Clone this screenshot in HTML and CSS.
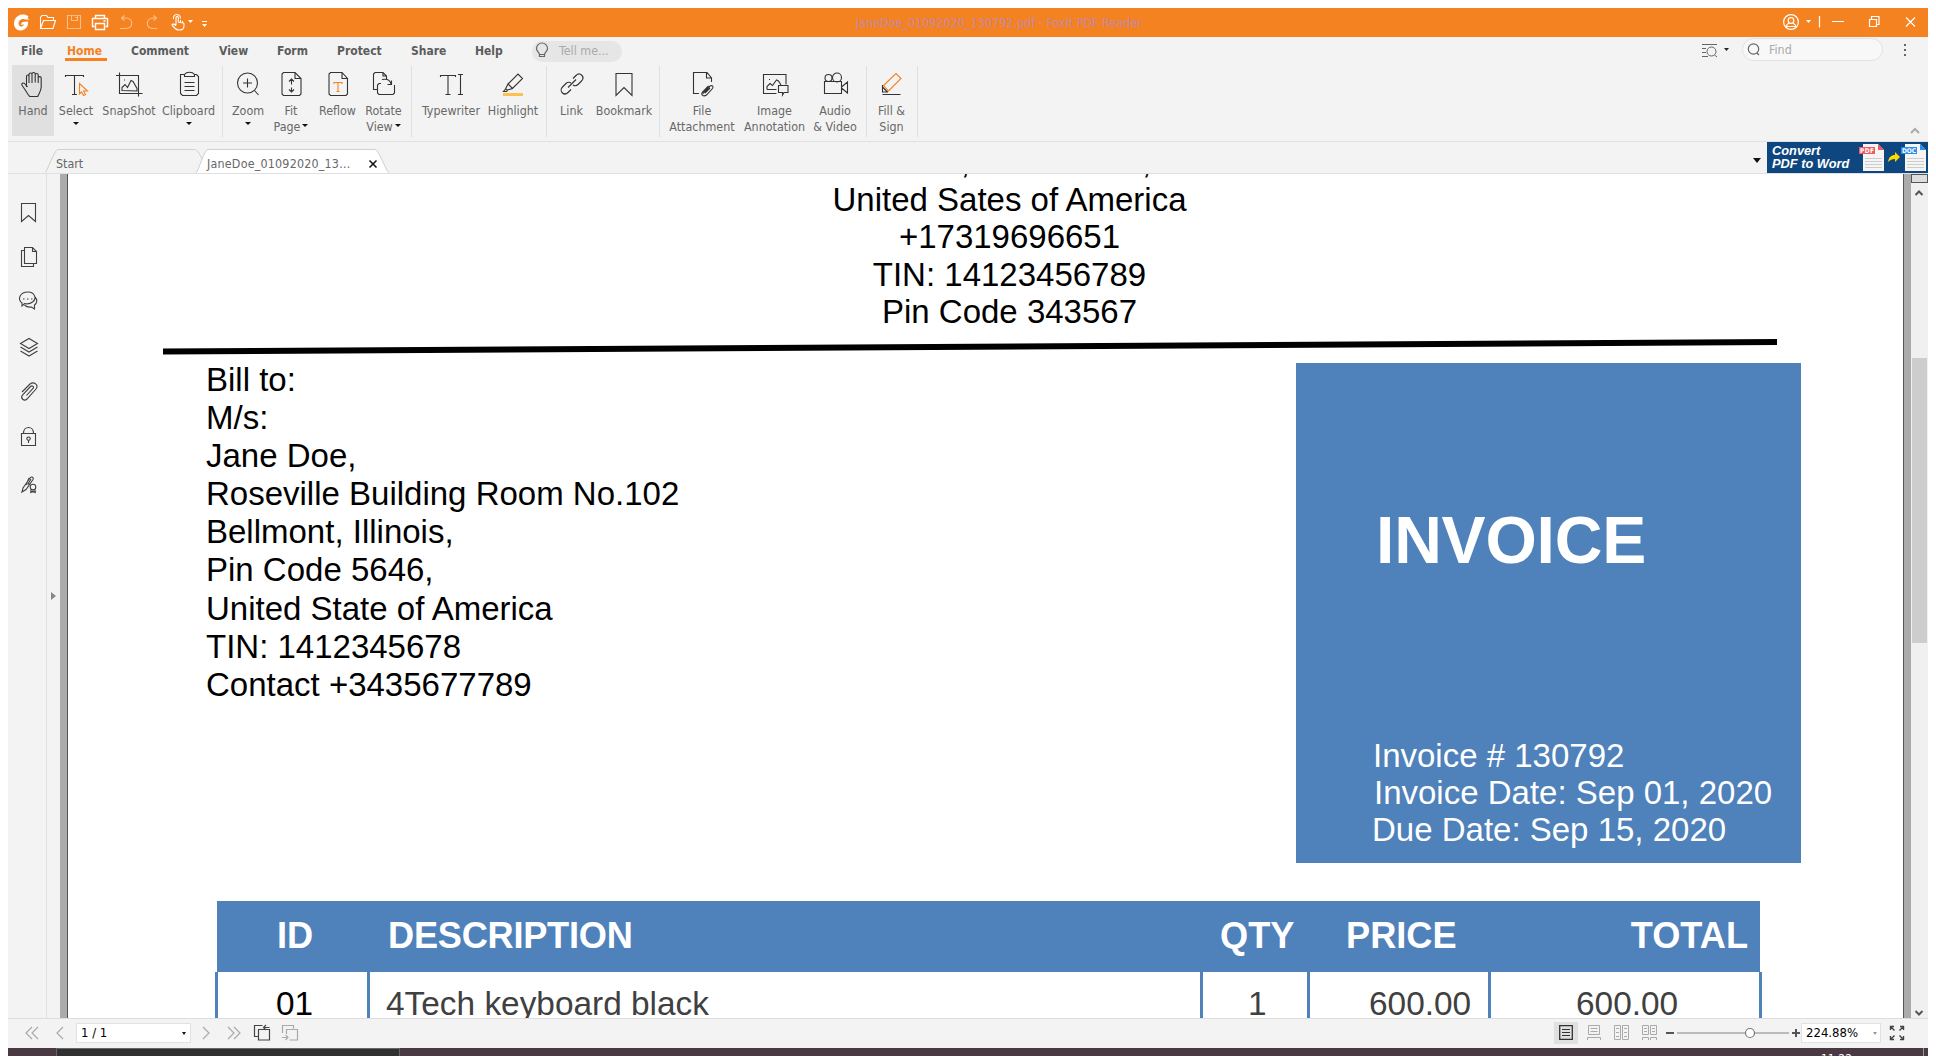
FILE: index.html
```html
<!DOCTYPE html>
<html lang="en">
<head>
<meta charset="utf-8">
<title>JaneDoe_01092020_130792.pdf - Foxit PDF Reader</title>
<link rel="stylesheet" href="styles.css">
</head>
<body>
<div class="window">
  <header class="titlebar">
    <svg class="quick" width="220" height="29" viewBox="8 8 220 29">
      <path fill="#fff" d="M28.500 16.500C24 13 17 14.500 14.600 20C12.500 26 16 30.800 21 30.500C26 30 28.500 26 28 21.500L22.500 22L20.500 24.800L24 24.500C22.500 27.500 19 27.300 18.500 23.800C18.500 20 22 17.800 26 19.500L29.500 19.500L27.500 18Z"/>
      <g fill="none" stroke="#fff" stroke-width="1.1">
        <path d="M40.500 28V17.500l1.500-2h4.500l1.500 2h5.500v3M40.500 28.500l3-8h12l-2.500 8z"/>
        <g stroke="#fbbd88"><path d="M67.500 15.500h13v13h-13zM71.500 15.500v5h6v-5M75 17.500h2"/><path d="M124.500 15.500l-3 2.500 3 2.500M121.500 18h5c7 1 7 10-.5 10.500h-6"/><path d="M153.500 15.500l3 2.500-3 2.500M156.500 18h-4c-7 1-7 10 .5 10.500h4"/></g>
        <path stroke-width="1.400" d="M95.500 18.500v-3h9v3M94.500 26.500h-2v-8h15v8h-2M95.500 23.500h9v6h-9zM103.500 21h2"/>
        <path d="M176 25V17.500c.3-1.500 2-1.500 2.300 0v4.500l5 1c.9.300.7 1.500.7 2.500 0 4-2 4.500-5.500 4.500-3.500-.5-5-3-6.500-5 .5-1.500 2.500-1 4 .8M180.500 20v3M182.500 21v2.500M173.500 19c-1-6 7-6 7-.5"/>
      </g>
      <path fill="#fff" d="M188 20h5l-2.500 3zM202 24h5l-2.500 3zM202 21h5v1h-5z"/>
    </svg>
    <div class="doc-title">JaneDoe_01092020_130792.pdf - Foxit PDF Reader</div>
    <svg class="caption" width="150" height="29" viewBox="1778 8 150 29">
      <g fill="none" stroke="#fff" stroke-width="1.200"><circle cx="1791" cy="22" r="7.400"/><circle cx="1791" cy="20.500" r="2.800"/><path d="M1786 27c.5-3 2-3.500 3.500-4M1796 27c-.5-3-2-3.500-3.500-4M1786 26.500h10M1819.500 16v11.500M1832 21.500h12M1869.500 19.500h7v7h-7zM1871.500 19.500v-3h7.500v8h-2.500M1906 17.500l9 9M1915 17.500l-9 9"/></g>
      <path fill="#fff" d="M1806 20h5l-2.500 3z"/>
    </svg>
  </header>

  <nav class="menubar">
    <div class="menus"><span>File</span><span class="current">Home</span><span>Comment</span><span>View</span><span>Form</span><span>Protect</span><span>Share</span><span>Help</span></div>
    <div class="tellme">
      <svg width="16" height="18" viewBox="0 0 16 18" fill="none" stroke="#666" stroke-width="1.200"><path d="M5.500 12.500C5.500 10.500 2.500 9.500 2.500 6.500a5.500 5.500 0 0 1 11 0c0 3-3 4-3 6zM5.500 12.500v2h5v-2"/></svg>
      <span>Tell me...</span>
    </div>
    <div class="findarea">
      <svg width="30" height="16" viewBox="1700 41 30 16" fill="none" stroke="#666"><path d="M1702 43.500h15M1702 47.500h4M1702 51.500h4M1702 55.500h6M1714.500 54l2.500 2"/><circle cx="1711.500" cy="50.500" r="4.500"/><path fill="#222" stroke="none" d="M1724 47h5l-2.500 3z"/></svg>
      <div class="find"><svg width="16" height="16" viewBox="0 0 16 16" fill="none" stroke="#666" stroke-width="1.200"><circle cx="6.500" cy="7" r="5.200"/><path d="M10 11l2 2"/></svg><span>Find</span></div>
      <svg width="4" height="14" viewBox="0 0 4 14" fill="#666"><path d="M1 1h2v2H1zM1 6h2v2H1zM1 11h2v2H1z"/></svg>
    </div>
  </nav>

  <section class="ribbon">
    <div class="tool hand"><svg viewBox="-1.500 0 30 30"><path d="M7 18V7.500c0-2 2.500-2 2.500 0V14M9.500 14V5.500c0-2 3-2 3 0V14M12.500 13V5c0-2 3.200-2 3.200 0v8.500M15.700 13V6c0-2 3-2 3 0v8M18.700 13V9c0-1.800 3-1.800 3 0v9c0 4-2 6-3.500 9.500h-8C8 25.500 5.500 20 3 17c-2-2.500 1-4 2.500-2L8 18"/></svg><span>Hand</span></div>
    <div class="tool w44"><svg viewBox="0 0 30 30"><path d="M4.500 8V6.500h18V8M13.500 6.500v19M11 25.500h5"/><path stroke="#f58220" d="M18.500 14.500l8 7.500h-4l2 3.500-2 1-2-3.500-2 2z"/></svg><span>Select</span><i class="arrow"></i></div>
    <div class="tool w62"><svg viewBox="0 0 30 30"><path d="M5.500 3.500v21h23M2 6.500h22.500v21M8 21.500v-3l3-3 2.500 3 3.500-7 2 1 4 7v2.500zM10 11h1"/></svg><span>SnapShot</span></div>
    <div class="tool w57"><svg viewBox="0 0 30 30"><path d="M10.500 5.500h-4v19l2 2h14l2-2V7.500l-2-2h-2.500M10.500 7.500v-2c2-3 8-3 10 0v2zM10.500 13.500h10M10.500 17.500h10M10.500 21.500h10"/></svg><span>Clipboard</span><i class="arrow"></i></div>
    <div class="sep s1"></div>
    <div class="tool w44"><svg viewBox="0 0 30 30"><circle cx="14.500" cy="14" r="10"/><path d="M14.500 9.500v9M10 14h9M21.500 21.500l4 4.500"/></svg><span>Zoom</span><i class="arrow"></i></div>
    <div class="tool w42"><svg viewBox="-.5 0 30 30"><path d="M7 3.500h11.500l6 6V25l-1.500 1.500H7L5.500 25V5zM18.500 3.500v6h6M15 10.500v5M15 18.500v4M12.500 12.500l2.500-2.500 2.500 2.500M12.500 20.500l2.500 2.500 2.500-2.500"/></svg><span>Fit<br>Page<i class="caret"></i></span></div>
    <div class="tool w51"><svg viewBox="-.5 0 30 30"><path d="M7 3.500h11.500l5.500 6V25l-1.500 1.500H7L5.500 25V5zM18.500 3.500v6H24"/><path stroke="#f58220" d="M10.500 15v-1.500h8V15M14.500 13.500v9M13 22.500h3"/></svg><span>Reflow</span></div>
    <div class="tool w41"><svg viewBox="0 0 30 30"><path d="M8.500 20.500h-4V5l1.500-1.500h8L17.500 7v3M14 3.500V7h3M12 14.500h-2L8.500 16v8l1.500 1.500h14l1.500-1.500v-8M13 10.500c5-1 8 0 9 4.500M18.500 15.500h4v-4"/></svg><span>Rotate<br>View<i class="caret"></i></span></div>
    <div class="sep s2"></div>
    <div class="tool w66"><svg viewBox="0 0 30 30"><path d="M4.500 8V6.500h15V8M12 6.500v19M9.500 25.500h5M22 5.500h5M24.500 5.500v20M22 25.500h5"/></svg><span>Typewriter</span></div>
    <div class="tool w58"><svg viewBox="-1 0 30 30"><path d="M9 15l10-10 4.500 4.500-10 10zM9 15l-2.500 5 2 1 5-1.500M6.500 20l-2 2.500h3l1-1"/><path stroke="#fbc24f" stroke-width="3" d="M4 25.500h20"/></svg><span>Highlight</span></div>
    <div class="sep s3"></div>
    <div class="tool w43"><svg viewBox="0 0 30 30"><path d="M16 9.500l3-3c4-4 9.500 1.500 5.500 5.500l-3.500 3.500c-1.500 1.500-3.500 1.500-5 .5M14 20.500l-3 3c-4 4-9.500-1.500-5.500-5.500L9 14.500c1.500-1.500 3.500-1.500 5-.5M11 18.500l8-8"/></svg><span>Link</span></div>
    <div class="tool w62"><svg viewBox="0 0 30 30"><path d="M7 4.500h16v22l-8-8-8 8z"/></svg><span>Bookmark</span></div>
    <div class="sep s4"></div>
    <div class="tool w74"><svg viewBox="0 0 30 30"><path d="M12 24.500H6.500v-21H20l4.500 5.500v4M19.500 3.500V9h5M16 24.500l7-7.500c2-1 4 0 2.500 2.500l-6 6.500c-3 2-6 0-4-3l6-6M18 24l5-5"/></svg><span>File<br>Attachment</span></div>
    <div class="tool w71"><svg viewBox="0 0 30 30"><path d="M16.500 24.500h-13v-19H26v10M7 20.500v-3l3-3 2.500 2 4-5.500 2 1 2.500 4M16.500 20.500H7M9 10.500h1M18.500 16.500H28v7h-4l-1.500 2.500V23.500h-4z"/></svg><span>Image<br>Annotation</span></div>
    <div class="tool w50"><svg viewBox="-1 0 30 30"><circle cx="7.500" cy="9" r="3.500"/><circle cx="16" cy="8.500" r="4.500"/><path d="M3.500 12.500h17v12h-17zM20.500 18l6-5v11l-6-5"/></svg><span>Audio<br>&amp; Video</span></div>
    <div class="sep s5"></div>
    <div class="tool w39"><svg viewBox="1 0 30 30"><path d="M6.500 16v7h5.500M6.500 25.500h18M6.500 18l5 5"/><path stroke="#f58220" d="M7.500 16.500L20 4.500l5 5L12.500 22z"/></svg><span>Fill &amp;<br>Sign</span></div>
    <div class="sep s6"></div>
    <svg class="collapse" width="10" height="8" viewBox="0 0 10 8"><path d="M1 6l4-4 4 4" fill="none" stroke="#aaa" stroke-width="2"/></svg>
  </section>

  <div class="tabs">
    <svg class="tabshape" width="400" height="31" viewBox="8 142 400 31"><path d="M45.500 172.500c2-3 9-22 12-23h137c3 0 6 6 8 11" fill="#f3f3f3" stroke="#d0d0d0"/><path d="M196 173c3-3 8-23 12-23.500h167c4 .5 10 19.500 14 23.500" fill="#fff" stroke="#d0d0d0"/></svg>
    <span class="tab-start">Start</span><span class="tab-doc">JaneDoe_01092020_13...</span>
    <svg class="close" width="10" height="10" viewBox="0 0 10 10"><path d="M1.500 1.500l7 7M8.500 1.500l-7 7" stroke="#111" stroke-width="1.500"/></svg>
    <i class="bigarrow"></i>
    <div class="banner"><b>Convert<br>PDF to Word</b>
      <svg width="70" height="31" viewBox="0 0 70 31"><path fill="#f5f5f5" d="M5 2h15l6 6v21H5zM47 2h15l6 6v21H47z"/><path fill="#ee5a5f" d="M20 2l6 6h-6zM1 5h16v7H1z"/><path fill="#2c8de8" d="M62 2l6 6h-6zM43 5h16v7H43z"/><path stroke="#ccc" d="M7 16.500h17M7 19.500h17M7 22.500h17M7 25.500h17M49 16.500h17M49 19.500h17M49 22.500h17M49 25.500h17"/><path fill="#ffd900" d="M30 20c1-5 3-7 7-7v-3l5 5-5 5v-3c-3 0-5 1-7 3z"/><g class="badge"><text x="2" y="11" textLength="14">PDF</text><text x="44" y="11" textLength="14">DOC</text></g></svg>
    </div>
  </div>

  <main class="work">
    <aside class="rail">
      <svg width="38" height="300" viewBox="8 200 38 300" fill="none" stroke="#404040" stroke-width="1.100">
        <path d="M21.500 203.500h14v18l-7-6-7 6z"/>
        <path d="M24.500 247.500h8l4 4v12h-12zM32.500 247.500v4h4M24 250.500h-2.500v16h12v-2.500"/>
        <path d="M22 306v-3c-5-4-2-11 6-11 7 0 9 7 4.500 10-2.500 2-6 2-8 1.500zM35 297c3 3 2 6-.5 8v4l-3-2c-3 .5-5 0-7-2M23 299h1.500M27 299h1.500M31 299h1.500"/>
        <path d="M20.500 343.500l8.500-5 8.500 5-8.500 5zM20.500 347l8.500 5 8.500-5M20.500 351l8.500 5 8.500-5"/>
        <path d="M22 392l8-8c4-3 9 1 6 5l-9 10c-3 3-7-1-4.500-4l8-8.500c2-1.500 4 .5 2.500 2l-6.500 7"/>
        <path d="M21.500 433.500h14v12h-14zM23.500 433.500c0-8 10-8 10 0M28.500 443v-2.500M28.500 437a1.700 1.700 0 1 0 .1 0z"/>
        <path d="M22 492l1-4 7-10c2-2 4-.5 3 1.500l-7 10zM26 485l3-7M30 484h-2l3-5"/><circle cx="33" cy="487" r="2.800"/><path d="M31 489.500v3l2-1.500 2 1.500v-3M30 492h6"/>
      </svg>
    </aside>
    <div class="railhandle"><i></i></div>
    <div class="gutter"></div>
    <article class="page">
      <div class="sender"><p class="cut"><span>,</span><span>,</span></p><p>United Sates of America</p><p>+17319696651</p><p>TIN: 14123456789</p><p>Pin Code 343567</p></div>
      <svg class="rule" width="1614" height="18" viewBox="0 0 1614 18"><path d="M0 10.500L1614 1v6L0 16.500z"/></svg>
      <div class="billing">
        <div class="billto"><p>Bill to:</p><p>M/s:</p><p>Jane Doe,</p><p>Roseville Building Room No.102</p><p>Bellmont, Illinois,</p><p>Pin Code 5646,</p><p>United State of America</p><p>TIN: 1412345678</p><p>Contact +3435677789</p></div>
        <div class="invoice"><h1>INVOICE</h1><p class="num">Invoice # 130792</p><p class="date">Invoice Date: Sep 01, 2020</p><p class="due">Due Date: Sep 15, 2020</p></div>
      </div>
      <div class="thead"><span class="id">ID</span><span class="desc">DESCRIPTION</span><span class="qty">QTY</span><span class="price">PRICE</span><span class="total">TOTAL</span></div>
      <div class="trow"><span class="id">01</span><span class="desc">4Tech keyboard black</span><span class="qty">1</span><span class="price">600.00</span><span class="total">600.00</span><span></span></div>
    </article>
    <div class="gutter right"></div>
    <div class="scroll"><div class="split"></div><svg width="17" height="14" viewBox="0 0 17 14"><path d="M4.500 9l3.500-3.500L11.500 9" fill="none" stroke="#555" stroke-width="2"/></svg><div class="thumb"></div><svg class="down" width="17" height="12" viewBox="0 0 17 12"><path d="M4.500 5L8 8.500 11.500 5" fill="none" stroke="#555" stroke-width="2"/></svg></div>
  </main>

  <footer class="status">
    <svg width="60" height="26" viewBox="16 1020 60 26" fill="none" stroke="#aaa" stroke-width="1.200"><path d="M32 1027l-6 6 6 6M38 1027l-6 6 6 6M63 1027l-6 6 6 6"/></svg>
    <div class="pagebox"><span>1 / 1</span><i class="arrow"></i></div>
    <svg width="115" height="26" viewBox="191 1020 115 26" fill="none" stroke="#aaa" stroke-width="1.200"><path d="M203 1027l6 6-6 6M228 1027l6 6-6 6M234 1027l6 6-6 6"/><path stroke="#444" d="M259 1036.500h-4.500v-11h8M258.500 1029.500h11v10.500h-11zM269.500 1027.500h-6M266 1025l-2.500 2.500 2.500 2.500"/><path d="M282.500 1033v-7.500h11v3M286.500 1034v-4.500h11v10.500h-8M282 1037.500h6M285.500 1035l2.500 2.500-2.500 2.500"/></svg>
    <div class="viewmodes">
      <div class="mode on"><svg width="14" height="16" viewBox="0 0 14 16" fill="none" stroke="#333"><path stroke-width="1.300" d="M.7.700h12.600v13.600H.7z"/><path d="M3 4.500h8M3 7.500h8M3 10.500h8"/></svg></div>
      <svg width="220" height="26" viewBox="1580 1020 220 26" fill="none" stroke="#aaa"><path d="M1588.500 1025.500h11v9h-11zM1590.500 1028.500h7M1590.500 1031.500h7M1587.500 1040v-2.500h13v2.500M1614.500 1025.500h6v14h-6zM1622.500 1025.500h6v14h-6zM1616 1028.500h3M1616 1032.500h3M1616 1036.500h3M1624 1028.500h3M1624 1032.500h3M1624 1036.500h3M1642.500 1025.500h6v9h-6zM1650.500 1025.500h6v9h-6zM1644 1028.500h3M1644 1031.500h3M1652 1028.500h3M1652 1031.500h3M1642.500 1040v-2.500h6v2.500M1650.500 1040v-2.500h6v2.500"/><path stroke="#555" stroke-width="2" d="M1666 1033h8M1792 1033h8M1796 1029v8"/><path stroke="#bbb" stroke-width="2" d="M1677 1033h112"/><circle cx="1750" cy="1033" r="4.500" fill="#fff" stroke="#777" stroke-width="1.200"/></svg>
    </div>
    <div class="zoombox"><span>224.88%</span><i class="arrow grey"></i></div>
    <svg width="16" height="16" viewBox="0 0 16 16" fill="none" stroke="#444" stroke-width="1.400"><path d="M1.500 5V1.500H5M1.500 1.500l4 4M11 1.500h3.500V5M14.500 1.500l-4 4M1.500 11v3.500H5M1.500 14.500l4-4M11 14.500h3.500V11M14.500 14.500l-4-4"/></svg>
  </footer>
  <div class="taskbar"><div class="app"></div><span>11:22</span><i></i></div>
</div>
</body>
</html>
```
FILE: styles.css
```css
* { box-sizing: border-box; }
body { margin: 0; padding: 8px 8px 0; height: 1056px; background: #fff; overflow: hidden; font: 12.4px/16px "DejaVu Sans Condensed", "DejaVu Sans", sans-serif; font-stretch: condensed; color: #686868; }
svg { display: block; flex: none; }
p, h1 { margin: 0; }
.window { width: 1920px; height: 1048px; display: flex; flex-direction: column; background: #f3f3f3; overflow: hidden; }

/* title bar */
.titlebar { height: 29px; flex: none; background: #f58220; display: flex; justify-content: space-between; }
.doc-title { color: #c488a8; line-height: 29px; margin: 0 auto 0 628px; white-space: nowrap; letter-spacing: .04px; }

/* menu bar */
.menubar { height: 28px; flex: none; display: flex; align-items: center; padding-left: 14px; }
.menus { display: grid; grid-template-columns: 46px 64px 88px 58px 60px 74px 64px 57px; font-weight: bold; font-size: 12px; color: #5c5c5c; align-self: flex-start; line-height: 28px; margin-left: -1px; }
.menus .current { color: #f58220; width: 42px; margin-left: -2px; padding-left: 2px; height: 24px; border-bottom: 3px solid #f58220; }
.tellme { width: 90px; height: 21px; border-radius: 11px; background: #e6e6e6; display: flex; align-items: center; gap: 9px; padding-left: 2px; color: #aaa; white-space: nowrap; }
.findarea { margin-left: auto; display: flex; align-items: center; padding-right: 21px; height: 25px; align-self: flex-start; }
.find { width: 141px; height: 23px; border: 1px solid #e2e2e2; border-radius: 12px; background: #f8f8f8; margin: 0 20px 0 12px; display: flex; align-items: center; gap: 6px; padding-left: 4px; color: #aaa; }

/* ribbon */
.ribbon { height: 77px; flex: none; display: flex; padding-left: 4px; border-bottom: 1px solid #e0e0e0; }
.tool { height: 71px; display: flex; flex-direction: column; align-items: center; padding-top: 4px; text-align: center; white-space: nowrap; }
.tool svg { width: 30px; height: 30px; fill: none; stroke: #333; stroke-width: 1.1; margin-bottom: 4px; }
.tool span { display: block; }
.tool.hand { width: 42px; background: #e0e0e0; }
.w39 { width: 39px; }
.w41 { width: 41px; }
.w42 { width: 42px; }
.w43 { width: 43px; }
.w44 { width: 44px; }
.w50 { width: 50px; }
.w51 { width: 51px; }
.w57 { width: 57px; }
.w58 { width: 58px; }
.w62 { width: 62px; }
.w66 { width: 66px; }
.w71 { width: 71px; }
.w74 { width: 74px; }
.arrow, .caret { display: block; width: 0; height: 0; border: 2.5px solid transparent; border-top: 3px solid #111; border-bottom: 0; }
.tool .arrow, .tool .caret { border-left-width: 3px; border-right-width: 3px; }
.tool .arrow { margin-top: 3px; }
.tool .caret { display: inline-block; margin-left: 2px; vertical-align: 4px; }
.sep { width: 1px; height: 71px; background: #e0e0e0; }
.s1 { margin: 1px 3px 0 5px; }
.s2 { margin: 1px 6px 0 7px; }
.s3 { margin: 1px 3px 0 4px; }
.s4 { margin: 1px 5px 0 4px; }
.s5 { margin: 1px 5px 0 6px; }
.s6 { margin: 1px 0 0 6px; }
.collapse { margin: 62px 8px 0 auto; }

/* document tabs */
.tabs { height: 32px; flex: none; border-bottom: 1px solid #e0e0e0; position: relative; display: flex; align-items: flex-start; line-height: 43px; }
.tabshape { position: absolute; left: 0; top: 0; }
.tabs span { position: relative; white-space: nowrap; }
.tab-start { margin-left: 48px; width: 151px; }
.tab-doc { width: 161px; letter-spacing: .2px; }
.close { position: relative; margin-top: 17px; }
.bigarrow { margin: 16px 6px 0 auto; border: 4.5px solid transparent; border-top: 5px solid #111; border-bottom: 0; }
.banner { width: 161px; height: 31px; background: #0e467f; color: #fff; display: flex; justify-content: space-between; font: italic bold 12.8px/13px "Liberation Sans", sans-serif; padding-left: 5px; white-space: nowrap; }
.banner b { padding-top: 2px; }
.badge { fill: #fff; font: normal bold 6.5px "DejaVu Sans Condensed", sans-serif; }

/* work area */
.work { height: 844px; flex: none; display: flex; overflow: hidden; }
.rail { width: 39px; border-right: 1px solid #e0e0e0; padding-top: 26px; }
.railhandle { width: 13px; display: flex; align-items: center; padding-left: 4px; }
.railhandle i { border: 4px solid transparent; border-left: 5px solid #888; border-right: 0; }
.gutter { width: 8px; background: #ababab; border-right: 1px solid #555; }
.gutter.right { border-right: 0; border-left: 1px solid #555; }
.page { width: 1835px; background: #fff; color: #000; font: 33px/38.1px "Liberation Sans", Arial, sans-serif; white-space: nowrap; overflow: hidden; }
.sender { display: flow-root; padding-left: 48px; text-align: center; line-height: 37.6px; height: 164px; }
.sender .cut { margin-top: -31px; display: flex; justify-content: center; gap: 172px; padding-left: 93px; }
.rule { margin-left: 95px; }
.billing { display: flex; justify-content: space-between; padding: 5px 102px 0 138px; height: 545px; }
.invoice { width: 505px; height: 500px; margin-top: 2px; background: #4f81ba; color: #fff; padding: 139px 0 0 77px; line-height: 37.1px; }
.invoice h1 { font-size: 66px; line-height: 76px; margin: 0 0 159px 3px; letter-spacing: -.2px; }
.invoice .date { padding-left: 1px; }
.invoice .due { margin-left: -1px; }

/* line items */
.thead, .trow { display: grid; }
.thead { margin-left: 149px; width: 1543px; height: 71px; grid-template-columns: 150px 833px 107px 181px 272px; background: #4f81ba; color: #fff; font-weight: bold; font-size: 36.2px; line-height: 70px; }
.trow { margin-left: 147px; height: 60px; grid-template-columns: 152px 833px 107px 181px 271px 3px; line-height: 64px; color: #404040; font-size: 33.4px; }
.trow span { border-left: 3px solid #4f81ba; }
.thead .id { padding-left: 60px; }
.thead .desc { padding-left: 21px; letter-spacing: -.25px; }
.thead .qty { padding-left: 20px; }
.thead .price { padding-left: 39px; }
.thead .total { text-align: right; padding-right: 12px; }
.trow .id { padding-left: 58px; color: #000; }
.trow .desc { padding-left: 16px; }
.trow .qty { padding-left: 45px; }
.trow .price { padding-left: 59px; }
.trow .total { padding-left: 85px; }

/* scroll bar */
.scroll { width: 17px; background: #f0f0f0; display: flex; flex-direction: column; }
.split { height: 9px; flex: none; border: 1px solid #555; background: #ddd; }
.scroll svg { margin-top: 3px; }
.thumb { width: 15px; height: 285px; margin: 158px 0 0 1px; background: #cdcdcd; }
.scroll .down { margin: auto 0 0; }

/* status bar */
.status { height: 30px; flex: none; border-top: 1px solid #ddd; display: flex; align-items: center; padding: 0 0 1px 8px; }
.pagebox, .zoombox { height: 20px; background: #fff; border: 1px solid #e2e2e2; color: #000; display: flex; align-items: center; justify-content: space-between; padding: 0 4px; }
.pagebox { width: 115px; font-size: 13px; }
.zoombox { width: 80px; font-size: 13px; margin: 0 8px 0 1px; padding: 0 3px 0 4px; }
.arrow.grey { border-top-color: #999; }
.viewmodes { margin-left: auto; display: flex; align-items: center; }
.mode { width: 24px; height: 22px; background: #e0e0e0; display: flex; align-items: center; justify-content: center; margin-right: 2px; }
.status > svg:last-child { margin-right: 23px; }

/* desktop strip */
.taskbar { height: 8px; flex: none; background: #493943; display: flex; color: #fff; overflow: hidden; }
.app { width: 344px; margin-left: 48px; background: #303030; border: 1px solid #666; border-bottom: 0; }
.taskbar span { margin: 3px 71px 0 auto; font-size: 12px; }
.taskbar i { border-left: 1px solid #999; width: 5px; }
```
